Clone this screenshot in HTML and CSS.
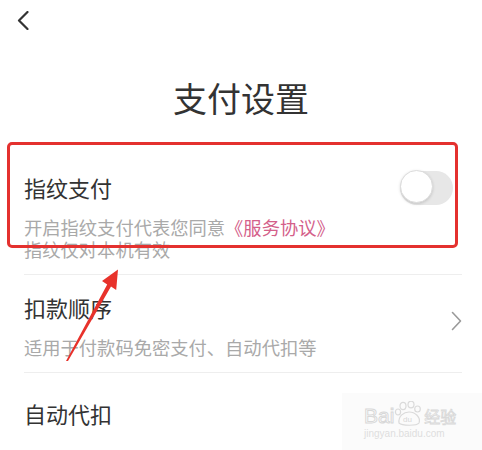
FILE: index.html
```html
<html lang="zh-CN">
<head>
    <meta charset="UTF-8">
    <meta name="viewport" content="width=device-width, initial-scale=1.0">
    <title>支付设置</title>
    <link rel="stylesheet" href="styles.css">
</head>
<body>
    <header class="topbar">
        <svg class="back" width="12" height="19" viewBox="0 0 12 19">
            <path d="M10.5 1 L2 9.5 L10.5 18" fill="none" stroke="#333" stroke-width="2.2" stroke-linecap="round" stroke-linejoin="round"/>
        </svg>
    </header>

    <h1 class="page-title">支付设置</h1>

    <main class="list">
        <div class="row">
            <div class="row-text">
                <div class="row-title">指纹支付</div>
                <div class="row-sub">开启指纹支付代表您同意<span class="link">《服务协议》</span></div>
                <div class="row-sub row-sub-next">指纹仅对本机有效</div>
            </div>
            <div class="toggle"><span class="knob"></span></div>
        </div>

        <div class="row">
            <div class="row-text">
                <div class="row-title">扣款顺序</div>
                <div class="row-sub">适用于付款码免密支付、自动代扣等</div>
            </div>
            <svg class="chevron" width="11" height="20" viewBox="0 0 11 20">
                <path d="M1.5 1.5 L9.5 10 L1.5 18.5" fill="none" stroke="#9a9a9a" stroke-width="1.6" stroke-linecap="round" stroke-linejoin="round"/>
            </svg>
        </div>

        <div class="row row-single">
            <div class="row-title">自动代扣</div>
        </div>
    </main>

    <!-- annotation overlay -->
    <div class="mark-box"></div>
    <svg class="mark-arrow" width="482" height="450" viewBox="0 0 482 450">
        <polygon points="66,361 107.2,284.4 102,281 118,269.5 116.2,290 111,286.6 68,361" fill="#e8322b"/>
    </svg>

    <div class="watermark">
        <div class="wm-logo">
            <span class="wm-bai">Bai</span>
            <svg class="wm-paw" width="30" height="26" viewBox="0 0 30 26">
                <ellipse cx="9" cy="5" rx="3" ry="3.6" fill="none" stroke="#dadada" stroke-width="1.2"/>
                <ellipse cx="17" cy="3.5" rx="3" ry="3.3" fill="none" stroke="#dadada" stroke-width="1.2"/>
                <ellipse cx="23.5" cy="8" rx="2.8" ry="3" fill="none" stroke="#dadada" stroke-width="1.2"/>
                <ellipse cx="4" cy="11" rx="2.6" ry="3" fill="none" stroke="#dadada" stroke-width="1.2"/>
                <path d="M5 22 C4 15 10 11 15 11 C21 11 27 16 25 22 C23 25 8 25 5 22 Z" fill="none" stroke="#dadada" stroke-width="1.2"/>
                <text x="9" y="21" font-size="8" fill="#d6d6d6" font-family="Liberation Sans, sans-serif">du</text>
            </svg>
            <span class="wm-jy">经验</span>
        </div>
        <div class="wm-url">jingyan.baidu.com</div>
    </div>
</body>
</html>
```

FILE: styles.css
```css
body {
    margin: 0;
    padding: 0;
    background-color: #fff;
    font-family: "Noto Sans CJK SC", "Noto Sans", sans-serif;
    color: #333;
    width: 482px;
    height: 450px;
    overflow: hidden;
}
.topbar {
    height: 19px;
    padding: 11px 0 0 17px;
}
.back {
    display: block;
}
.page-title {
    margin: 51px 0 40px;
    font-size: 34px;
    line-height: 1;
    font-weight: 400;
    text-align: center;
    color: #333;
}
.list {
    margin: 0 20px 0 24px;
}
.row {
    display: flex;
    align-items: flex-start;
    padding: 21px 0 14px;
    border-bottom: 1px solid #eeeeee;
}
.row-text {
    flex: 1;
}
.row-title {
    font-size: 22px;
    line-height: 22px;
}
.row-sub {
    margin-top: 18px;
    font-size: 18.3px;
    line-height: 22px;
    color: #a9a9a9;
}
.row-sub-next {
    margin-top: 0;
}
.row-sub .link {
    color: #d4608a;
}
.row-single {
    padding-top: 29px;
    border-bottom: none;
}
.toggle {
    position: relative;
    width: 53px;
    height: 34px;
    margin: -5px 9px 0 0;
    border-radius: 17px;
    background-color: #e7e7e7;
}
.knob {
    position: absolute;
    left: 0;
    top: -1px;
    width: 31px;
    height: 31px;
    border-radius: 50%;
    background-color: #fff;
    border: 1px solid #dcdcdc;
    box-shadow: 0 1px 3px rgba(0, 0, 0, 0.15);
}
.chevron {
    align-self: center;
    margin-top: -12px;
}
.mark-box {
    position: absolute;
    left: 7px;
    top: 142px;
    width: 445px;
    height: 100px;
    border: 3px solid #e4312f;
    border-radius: 5px;
}
.mark-arrow {
    position: absolute;
    left: 0;
    top: 0;
}
.watermark {
    position: absolute;
    left: 342px;
    top: 393px;
    width: 140px;
    height: 57px;
    background-color: #fbfbfb;
    padding: 10px 0 0 22px;
    box-sizing: border-box;
}
.wm-logo {
    display: flex;
    align-items: flex-end;
    height: 22px;
}
.wm-bai {
    font-family: "Liberation Sans", sans-serif;
    font-size: 21px;
    line-height: 18px;
    color: #fff;
    -webkit-text-stroke: 1px #d8d8d8;
}
.wm-paw {
    margin: 0 0 -2px 0;
}
.wm-jy {
    font-size: 16px;
    line-height: 18px;
    color: #fff;
    -webkit-text-stroke: 0.8px #d8d8d8;
}
.wm-url {
    margin-top: 3px;
    font-family: "Liberation Sans", sans-serif;
    font-size: 10px;
    color: #dedede;
}
```
